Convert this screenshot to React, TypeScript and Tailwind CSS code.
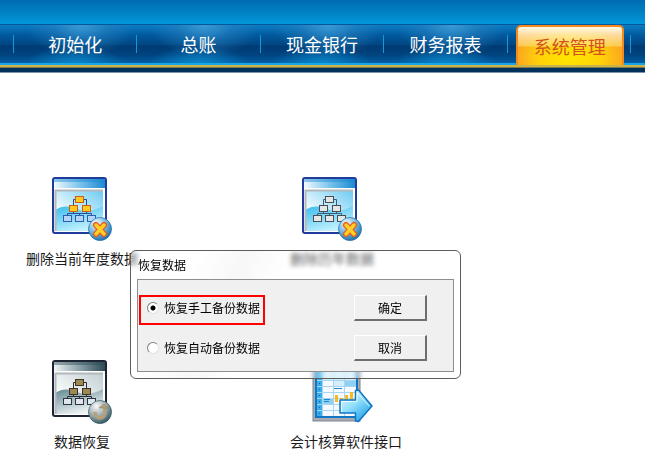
import { useState } from "react";
import clsx from "clsx";

const NAV_ITEMS = ["初始化", "总账", "现金银行", "财务报表", "系统管理"];

const OPTIONS = [
    { value: "manual", label: "恢复手工备份数据" },
    { value: "auto", label: "恢复自动备份数据" },
];

interface Palette {
    frame: string;
    bar: [string, string, string];
    skyTop: string;
    wave: [string, string];
    line: string;
    node: [string, string];
    leaf: [string, string];
    badge: [string, string, string];
}

const BLUE: Palette = {
    frame: "#1f3c9c",
    bar: ["#f2fbff", "#7cc4ec", "#1a8ad0"],
    skyTop: "#6ccbf2",
    wave: ["#38bcec", "#c4f2ff"],
    line: "#2a4a9a",
    node: ["#ffc91f", "#c8601c"],
    leaf: ["#b4d6f6", "#2e5cae"],
    badge: ["#f4fbff", "#6fb4dc", "#1c6ca8"],
};

const SILVER: Palette = {
    ...BLUE,
    line: "#3e5a78",
    node: ["#e4e6e8", "#4a4e54"],
    leaf: ["#e4e6e8", "#4a4e54"],
};

const DARK: Palette = {
    frame: "#1d2534",
    bar: ["#f0f4f4", "#8aa0a6", "#2c4c56"],
    skyTop: "#c2d0d2",
    wave: ["#5f8690", "#f0f6f6"],
    line: "#2a2c32",
    node: ["#9c8850", "#3c3526"],
    leaf: ["#dfe6ec", "#2c3440"],
    badge: ["#fafafa", "#9aa8ac", "#2e5560"],
};

function WindowIcon({ id, palette, badge }: { id: string; palette: Palette; badge: "delete" | "restore" }) {
    const { frame, bar, skyTop, wave, line, node, leaf } = palette;
    return (
        <svg viewBox="0 0 64 66" className="w-16 h-[66px]" aria-hidden="true">
            <defs>
                <linearGradient id={`${id}-bar`}>
                    <stop offset="0" stopColor={bar[0]} />
                    <stop offset="0.5" stopColor={bar[1]} />
                    <stop offset="1" stopColor={bar[2]} />
                </linearGradient>
                <linearGradient id={`${id}-sky`} x1="1" y1="0" x2="0.3" y2="0.8">
                    <stop offset="0" stopColor={skyTop} />
                    <stop offset="1" stopColor="#ffffff" />
                </linearGradient>
                <linearGradient id={`${id}-wave`} x1="0" y1="0" x2="0.5" y2="1">
                    <stop offset="0" stopColor={wave[0]} />
                    <stop offset="1" stopColor={wave[1]} />
                </linearGradient>
                <radialGradient id={`${id}-badge`} cx="0.35" cy="0.25" r="0.8">
                    <stop offset="0" stopColor={palette.badge[0]} />
                    <stop offset="0.55" stopColor={palette.badge[1]} />
                    <stop offset="1" stopColor={palette.badge[2]} />
                </radialGradient>
            </defs>
            <rect x="3" y="2" width="53" height="55" rx="2" fill="#fff" stroke={frame} strokeWidth="2" />
            <rect x="4" y="3" width="51" height="9" fill={`url(#${id}-bar)`} />
            <rect x="4" y="3" width="51" height="3" fill={bar[2]} fillOpacity="0.45" />
            <rect x="5" y="14" width="48" height="41" fill={`url(#${id}-sky)`} />
            <path d="M5 34c8-5 15-4 22-1s15 3 26-3v25H5z" fill={`url(#${id}-wave)`} />
            <path d="M5.500 55V14.500H53" fill="none" stroke="#b4b8bc" strokeWidth="2" />
            <g fill="none" stroke={line}>
                <path d="M23.500 29v-5.500h13V29M17.500 40v-2.500h24V40M23.500 35v3M36.500 35v3M29.500 37v3" />
            </g>
            <g fill={node[0]} stroke={node[1]}>
                <rect x="25.500" y="20.500" width="8" height="6" />
                <rect x="19.500" y="29.500" width="8" height="6" />
                <rect x="32.500" y="29.500" width="8" height="6" />
            </g>
            <g fill={leaf[0]} stroke={leaf[1]}>
                <rect x="13.500" y="39.500" width="8" height="6" />
                <rect x="25.500" y="39.500" width="8" height="6" />
                <rect x="37.500" y="39.500" width="8" height="6" />
            </g>
            <circle cx="50" cy="53" r="11.500" fill={`url(#${id}-badge)`} stroke={palette.badge[2]} strokeOpacity="0.7" />
            {badge === "delete" ? (
                <g fill="none" strokeLinecap="round">
                    <path d="M46 49l8 9M54 49l-8 9" stroke="#ea5a1c" strokeWidth="6" />
                    <path d="M46 49l8 9M54 49l-8 9" stroke="#ffcf28" strokeWidth="3.500" />
                </g>
            ) : (
                <g>
                    <path d="M45 53c0 8 10 8 10 0v-4" fill="none" stroke="#b3a17a" strokeWidth="3.500" />
                    <path d="M49 49h9l-4-4z" fill="#b3a17a" stroke="#8a7a58" strokeWidth="0.500" />
                </g>
            )}
        </svg>
    );
}

function ReportIcon() {
    return (
        <svg viewBox="0 0 68 66" className="w-[68px] h-[66px]" aria-hidden="true">
            <defs>
                <linearGradient id="report-arrow" x1="0" y1="0" x2="0.8" y2="1">
                    <stop offset="0" stopColor="#f4fdff" />
                    <stop offset="0.5" stopColor="#8fe0fc" />
                    <stop offset="1" stopColor="#1a9ae4" />
                </linearGradient>
            </defs>
            <rect x="1" y="3" width="47" height="59" fill="#a9adb3" stroke="#7e848c" />
            <rect x="4" y="5" width="41" height="53" fill="#f4faff" stroke="#1276c4" strokeWidth="2" />
            <path d="M5 6h5v51H5z" fill="#36aeea" />
            <path d="M11 6h33v15H33v6H22v-6H11z" fill="#d4eefb" />
            <path d="M33 21h11v6H33zM11 39h11v6H11z" fill="#8fd0f4" />
            <path d="M5 21.500h39M5 27.500h39M5 33.500h39M5 39.500h39M5 45.500h39M5 51.500h39M10.500 6v51M21.500 6v51M32.500 6v51" stroke="#a8d6f0" />
            <path d="M7 24.500h1M7 30.500h1M7 36.500h1M7 42.500h1M7 48.500h1M7 54.500h1" stroke="#0b64ac" />
            <path d="M22 29.500h8M12 40.500h6M12 42.500h5" stroke="#1c86d0" />
            <path d="M23 36h3v7h-3zM28 39h3v4h-3zM33 36h3v7h-3zM38 33h3v10h-3z" fill="#f8b820" />
            <path d="M28 41h15.500v-9.500l3-.5L60 47 46.500 62.500l-3-.5v-8H28z" fill="url(#report-arrow)" stroke="#1276c4" strokeWidth="1.500" strokeLinejoin="round" />
            <path d="M29.500 53V42.500H45v-9l12 13.500" fill="none" stroke="#fff" strokeOpacity="0.8" />
        </svg>
    );
}

function Header() {
    return (
        <header>
            <div className="h-6 bg-linear-to-b from-[#006bb0] to-[#0398da]" />
            <nav className="flex h-[41px] pl-[13px] pr-[14px] border-t border-[#04589a] bg-[linear-gradient(to_bottom,#0d7cc2_0,#015a9e_10px,#004580_20px,#003a72_21px,#004480_30px,#005da4_38px,#16a6ea_38px,#16a6ea_40px)]">
                {NAV_ITEMS.map(item => {
                    const active = item === "系统管理";
                    return (
                        <div key={item} className="flex-1 flex">
                            <span className="w-px h-[18px] mt-2.5 bg-[#109ade]" />
                            <a
                                href="#"
                                className={clsx(
                                    "flex-1 flex justify-center text-lg leading-[38px]",
                                    active
                                        ? "ml-2 mr-1.5 rounded-t-[5px] border-2 border-b-0 border-[#f48a1c] text-[#d4501c] bg-[linear-gradient(to_bottom,#fffae8_0,#fff0c4c0_8px,#ffe27890_19px,transparent_20px),radial-gradient(ellipse_60%_100%_at_50%_80%,#ffe600_0,#ffd20a_50%,#f9942a_100%)]"
                                        : "text-white bg-[radial-gradient(ellipse_55px_32px_at_55%_0,#3a98d4_0,#2a84c480_50%,transparent_100%),radial-gradient(ellipse_50px_18px_at_50%_39px,#0a86ca_0,transparent_100%)] bg-[length:100%_38px] bg-no-repeat"
                                )}
                            >
                                {item}
                            </a>
                        </div>
                    );
                })}
                <span className="w-px h-[18px] mt-2.5 bg-[#109ade]" />
            </nav>
            <div className="h-[3px] bg-[#c9b44c] border-b border-[#7d7a45]" />
            <div className="h-[5px] bg-[#00305c] border-b border-[#7c92a8]" />
        </header>
    );
}

function RestoreDialog() {
    const [selected, setSelected] = useState("manual");

    return (
        <section
            role="dialog"
            aria-labelledby="restore-title"
            className="absolute left-[130px] top-[250px] w-[331px] px-1.5 pb-1.5 rounded-md border border-[#5c5c5c] bg-[linear-gradient(115deg,#ffffff60_0,#ffffff60_18%,#f0f0f080_30%,#ffffff50_42%)] backdrop-blur-[2px] text-xs text-black"
        >
            <h2 id="restore-title" className="h-7 pl-px leading-7">恢复数据</h2>
            <form className="flex flex-col gap-2.5 pt-[15px] pb-1.5 pl-px pr-[26px] border border-[#8e8e8e] bg-[#f0f0f0]" onSubmit={e => e.preventDefault()}>
                {OPTIONS.map((option, i) => (
                    <div key={option.value} className="flex items-start justify-between">
                        <label
                            className={clsx(
                                "flex items-center gap-[5px] w-[126px] h-[30px] pl-1.5 pb-1 border-2 whitespace-nowrap",
                                i === 0 ? "border-[#ff0000]" : "border-transparent"
                            )}
                        >
                            <input
                                type="radio"
                                name="source"
                                value={option.value}
                                checked={selected === option.value}
                                onChange={() => setSelected(option.value)}
                                className="appearance-none shrink-0 w-3 h-3 rounded-full border border-t-[#808080] border-l-[#808080] border-b-[#e4e4e4] border-r-[#e4e4e4] bg-white checked:bg-[radial-gradient(circle,#000_2px,#fff_3px)]"
                            />
                            {option.label}
                        </label>
                        <button
                            type={i === 0 ? "submit" : "button"}
                            className="w-[73px] h-[26px] border-t border-l border-b-2 border-r-2 border-t-white border-l-white border-b-[#6e6e6e] border-r-[#6e6e6e] bg-[#f0f0f0]"
                        >
                            {i === 0 ? "确定" : "取消"}
                        </button>
                    </div>
                ))}
            </form>
        </section>
    );
}

export default function App() {
    return (
        <div className="relative min-h-screen bg-white font-['Noto_Sans_CJK_SC',sans-serif]">
            <Header />
            <main className="grid grid-cols-[112px_1fr] gap-x-[152px] gap-y-[91px] justify-items-center pl-[26px] pt-[103px] text-sm text-[#1a1a1a]">
                <a href="#" className="flex flex-col items-center gap-1.5 whitespace-nowrap">
                    <WindowIcon id="current" palette={BLUE} badge="delete" />
                    删除当前年度数据
                </a>
                <a href="#" className="flex flex-col items-center gap-1.5 whitespace-nowrap justify-self-start">
                    <WindowIcon id="history" palette={SILVER} badge="delete" />
                    删除历年数据
                </a>
                <a href="#" className="flex flex-col items-center gap-1.5 whitespace-nowrap">
                    <WindowIcon id="restore" palette={DARK} badge="restore" />
                    数据恢复
                </a>
                <a href="#" className="flex flex-col items-center gap-1.5 whitespace-nowrap justify-self-start">
                    <ReportIcon />
                    会计核算软件接口
                </a>
            </main>
            <RestoreDialog />
        </div>
    );
}
